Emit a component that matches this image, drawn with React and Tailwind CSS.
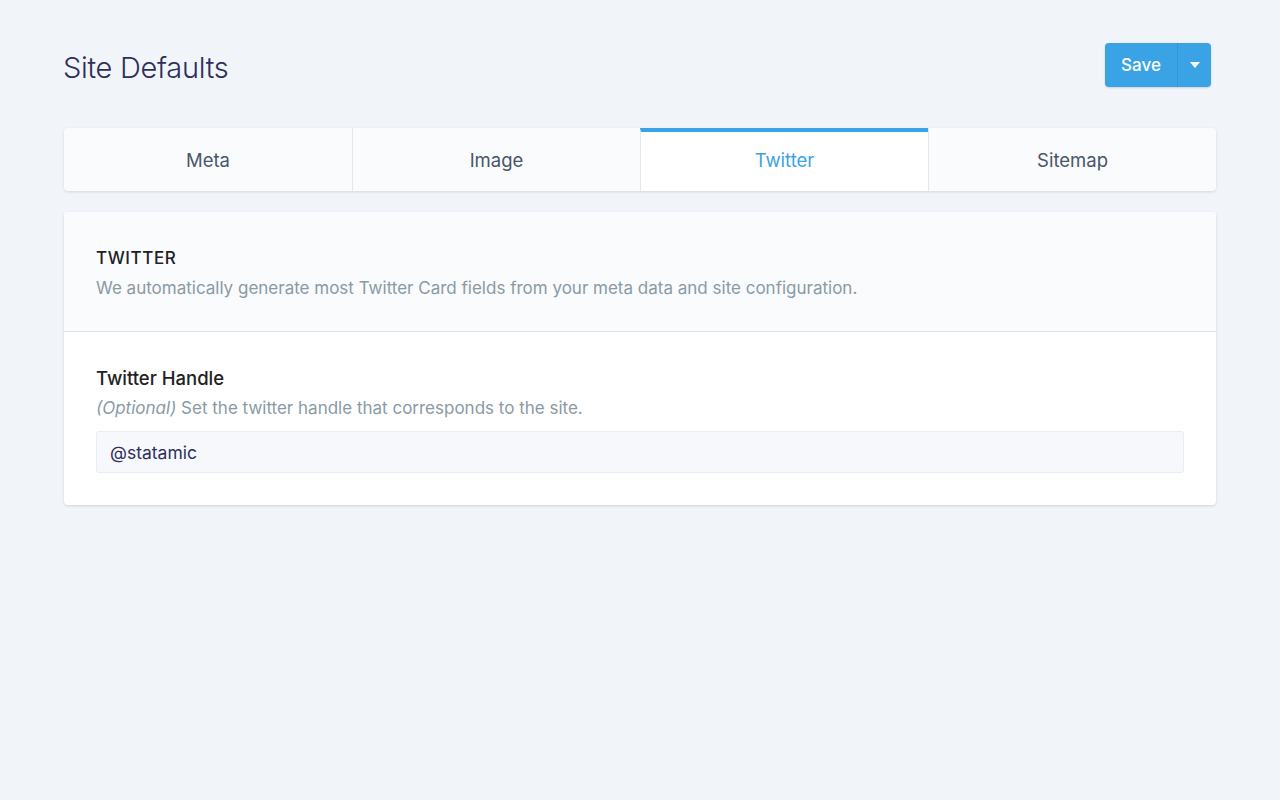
import React, { useState } from 'react';

const tabs = ['Meta', 'Image', 'Twitter', 'Sitemap'];

export default function App() {
  const [active, setActive] = useState('Twitter');
  const [handle, setHandle] = useState('@statamic');

  return (
    <div className="min-h-[800px] bg-[#f1f5f9] px-16 pt-[43px] font-['Inter',sans-serif]">
      {/* Header */}
      <div className="flex h-[44px] items-start justify-between pr-[5px]">
        <h1 className="-ml-[1px] mt-[3px] text-[29px] font-light leading-[44px] tracking-[-0.3px] text-[#2e2f5c]">Site Defaults</h1>
        <div className="flex h-[44px] overflow-hidden rounded-[4px] bg-[#3aa3e6] text-white shadow-[0_1px_2px_rgba(0,0,0,0.15)]">
          <button className="w-[72px] pt-[2px] text-[17px] font-medium">Save</button>
          <button className="flex w-[34px] items-center justify-center border-l border-[#3496d4]">
            <svg width="10" height="6" viewBox="0 0 10 6"><path d="M0 0h10L5 6z" fill="white" /></svg>
          </button>
        </div>
      </div>

      {/* Tabs */}
      <div className="mt-[41px] grid h-[63px] grid-cols-4 overflow-hidden rounded-[4px] bg-[#f9fbfd] shadow-[0_1px_3px_rgba(0,0,0,0.12)]">
        {tabs.map((t, i) => (
          <button
            key={t}
            onClick={() => setActive(t)}
            className={
              (t === active
                ? 'border-t-[4px] border-[#3aa3e6] bg-white pb-[2px] text-[#3aa3e6]'
                : 'pt-[2px] text-[#4a5568]') +
              (i > 0 ? ' border-l border-l-[#e3e8ee]' : '') +
              ' text-[18.5px]'
            }
          >
            {t}
          </button>
        ))}
      </div>

      {/* Card */}
      <div className="mt-[21px] overflow-hidden rounded-[4px] bg-white shadow-[0_1px_3px_rgba(0,0,0,0.14)]">
        <div className="border-b border-[#dde3e8] bg-[#f9fbfd] px-8 pt-[34px] pb-[31px]">
          <h2 className="text-[17px] font-medium uppercase leading-[24px] tracking-[0.6px] text-[#1f2124]">Twitter</h2>
          <p className="mt-[6px] text-[17px] leading-[24px] text-[#8a9aa5]">
            We automatically generate most Twitter Card fields from your meta data and site configuration.
          </p>
        </div>
        <div className="px-8 pt-[34px] pb-8">
          <label className="block text-[18.5px] font-medium leading-[24px] text-[#1f2124]">Twitter Handle</label>
          <p className="mt-[6px] text-[17px] leading-[24px] text-[#8a9aa5]">
            <em>(Optional)</em> Set the twitter handle that corresponds to the site.
          </p>
          <input
            value={handle}
            onChange={(e) => setHandle(e.target.value)}
            className="mt-[11px] h-[42px] w-full rounded-[3px] border border-[#e8edf1] bg-[#f6f8fb] px-[13px] text-[17.5px] text-[#2e2f5c] outline-none"
          />
        </div>
      </div>
    </div>
  );
}
